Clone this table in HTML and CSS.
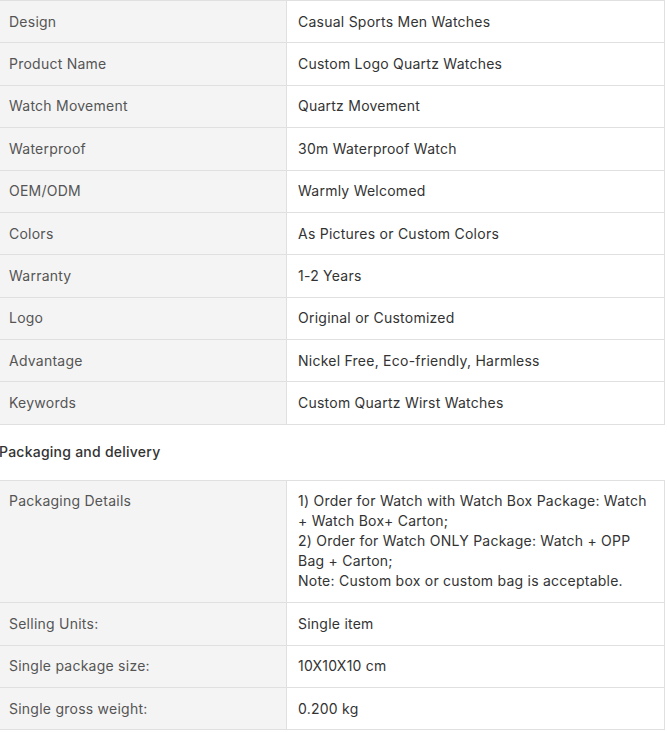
FILE: index.html
```html
<!DOCTYPE html>
<html lang="en">
<head>
<meta charset="utf-8">
<title>Product attributes</title>
<link rel="stylesheet" href="styles.css">
</head>
<body>
<div class="page">
  <table class="attrs">
    <tbody>
      <tr><td class="k">Design</td><td class="v">Casual Sports Men Watches</td></tr>
      <tr><td class="k">Product Name</td><td class="v">Custom Logo Quartz Watches</td></tr>
      <tr><td class="k">Watch Movement</td><td class="v">Quartz Movement</td></tr>
      <tr><td class="k">Waterproof</td><td class="v">30m Waterproof Watch</td></tr>
      <tr><td class="k">OEM/ODM</td><td class="v">Warmly Welcomed</td></tr>
      <tr><td class="k">Colors</td><td class="v">As Pictures or Custom Colors</td></tr>
      <tr><td class="k">Warranty</td><td class="v">1-2 Years</td></tr>
      <tr><td class="k">Logo</td><td class="v">Original or Customized</td></tr>
      <tr><td class="k">Advantage</td><td class="v">Nickel Free, Eco-friendly, Harmless</td></tr>
      <tr><td class="k">Keywords</td><td class="v">Custom Quartz Wirst Watches</td></tr>
    </tbody>
  </table>
  <h3 class="section-title">Packaging and delivery</h3>
  <table class="attrs">
    <tbody>
      <tr><td class="k">Packaging Details</td><td class="v">1) Order for Watch with Watch Box Package: Watch + Watch Box+ Carton;<br>2) Order for Watch ONLY Package: Watch + OPP Bag + Carton;<br>Note: Custom box or custom bag is acceptable.</td></tr>
      <tr><td class="k">Selling Units:</td><td class="v">Single item</td></tr>
      <tr><td class="k">Single package size:</td><td class="v">10X10X10 cm</td></tr>
      <tr><td class="k">Single gross weight:</td><td class="v">0.200 kg</td></tr>
    </tbody>
  </table>
</div>
</body>
</html>
```

FILE: styles.css
```css
html, body {
  margin: 0;
  padding: 0;
  background: #ffffff;
}
body {
  font-family: Inter, "Liberation Sans", Arial, sans-serif;
  font-size: 14px;
  letter-spacing: 0.24px;
  color: #333333;
}
.page {
  width: 666px;
  margin-left: -1px;
}
.attrs {
  width: 100%;
  border-collapse: collapse;
  table-layout: fixed;
}
.attrs td {
  border: 1px solid #e0e0e0;
  padding: 10.7px 10px 10.7px 9px;
  line-height: 20px;
  vertical-align: top;
  text-align: left;
}
.attrs td.k {
  width: 267px;
  background: #f4f4f4;
  color: #555555;
}
.attrs td.v {
  background: #ffffff;
  color: #333333;
  padding-left: 11px;
  padding-right: 14px;
}
.section-title {
  margin: 0;
  padding: 16.5px 0;
  font-size: 14px;
  font-weight: 500;
  line-height: 22px;
  color: #333333;
}
```
